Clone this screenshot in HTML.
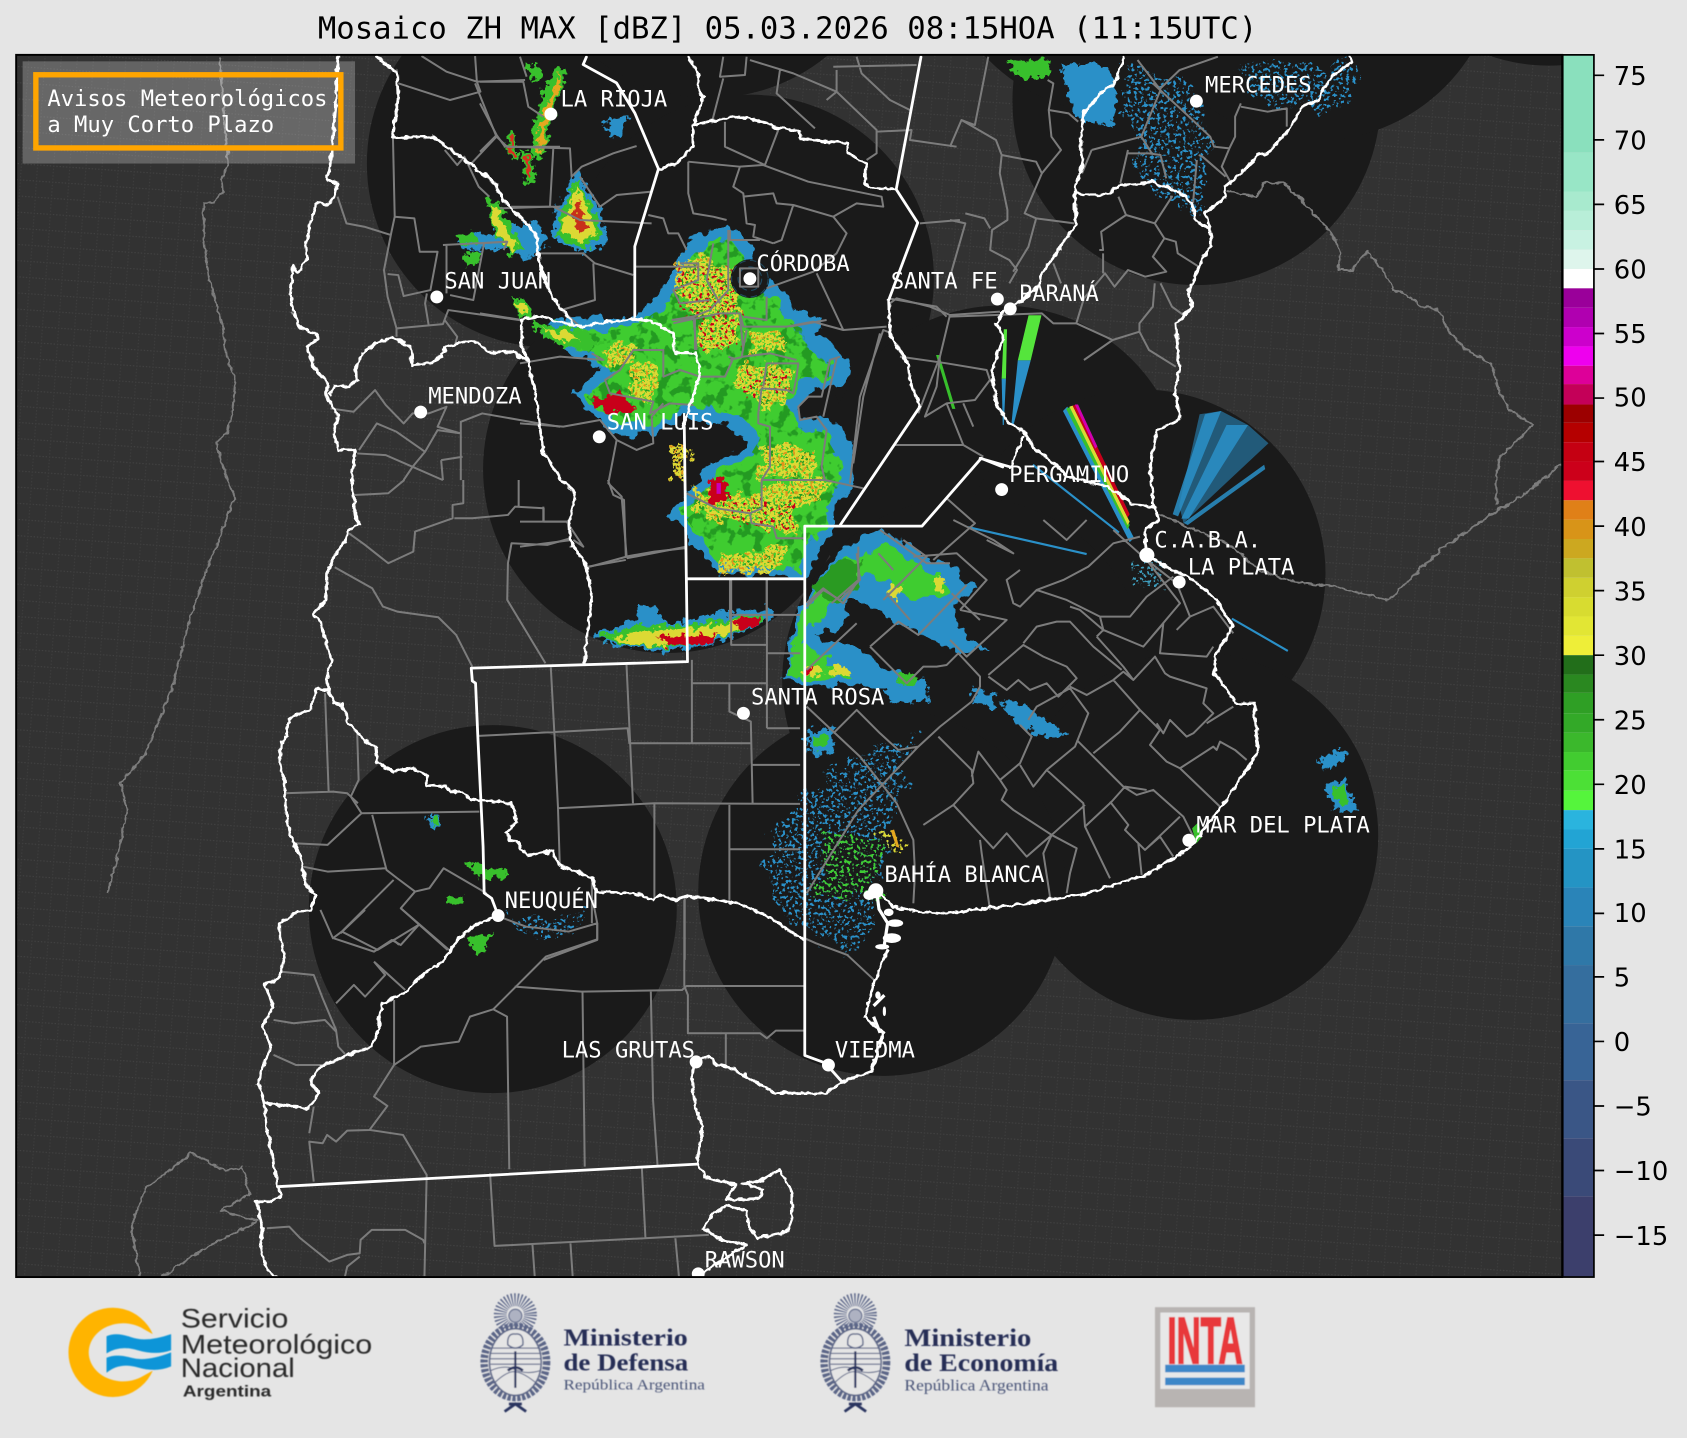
<!DOCTYPE html>
<html><head><meta charset="utf-8"><title>Mosaico ZH MAX</title>
<style>
html,body{margin:0;padding:0;background:#e5e5e5}
svg{display:block}
.w{fill:none;stroke:#fff;stroke-width:2.6;stroke-linejoin:round;stroke-linecap:round}
.g path{fill:none;stroke:#7c7c7c;vector-effect:non-scaling-stroke;stroke-width:2;stroke-linejoin:round}
.l{font-family:"DejaVu Sans Mono","Liberation Mono",monospace;font-size:20.6px;fill:#fff}
.t{font-family:"DejaVu Sans","Liberation Sans",sans-serif;font-size:24px;fill:#000}
.s{font-family:"Liberation Sans",sans-serif;fill:#2a2a2a}
.m{font-family:"Liberation Serif",serif;font-weight:bold;fill:#262e56}
.r{font-family:"Liberation Serif",serif;fill:#4a5478}
</style></head><body>
<svg xmlns="http://www.w3.org/2000/svg" width="1687" height="1438" viewBox="0 0 1568 1336.6">
<defs>
<clipPath id="ax"><rect x="15" y="51" width="1437" height="1136"/></clipPath>
<clipPath id="body"><path d="M678,222 692,240 692,262 722,280 730,298 745,305 752,325 772,338 770,352 745,350 733,372 737,396 765,402 783,432 782,452 768,470 768,492 750,505 742,530 675,526 655,505 632,475 655,455 668,437 695,427 708,405 690,388 640,376 610,392 572,392 545,369 570,348 540,322 525,312 590,304 620,282 635,250 648,232Z"/></clipPath>
<pattern id="gr" width="15" height="15" patternUnits="userSpaceOnUse" patternTransform="rotate(4)">
<path d="M0 .5H15" stroke="#434343" stroke-width="1" stroke-dasharray="1.2 1.8"/><path d="M.5 0V15" stroke="#3e3e3e" stroke-width="1" stroke-dasharray="1.2 1.8"/></pattern>
<filter id="rough" x="-15%" y="-15%" width="130%" height="130%" color-interpolation-filters="sRGB"><feTurbulence type="fractalNoise" baseFrequency=".07" numOctaves="3" seed="4" result="n"/><feDisplacementMap in="SourceGraphic" in2="n" scale="18" xChannelSelector="R" yChannelSelector="G"/></filter>
<filter id="rough2" x="-20%" y="-20%" width="140%" height="140%" color-interpolation-filters="sRGB"><feTurbulence type="fractalNoise" baseFrequency=".14" numOctaves="3" seed="9" result="n"/><feDisplacementMap in="SourceGraphic" in2="n" scale="14" xChannelSelector="R" yChannelSelector="G"/></filter>
<filter id="wig" filterUnits="userSpaceOnUse" x="0" y="40" width="1460" height="1160" color-interpolation-filters="sRGB"><feTurbulence type="fractalNoise" baseFrequency=".16" numOctaves="2" seed="21" result="n"/><feDisplacementMap in="SourceGraphic" in2="n" scale="5" xChannelSelector="R" yChannelSelector="G"/></filter>
<!-- sparse blue/other speckle with irregular outline -->
<filter id="speck" x="-15%" y="-15%" width="130%" height="130%" color-interpolation-filters="sRGB"><feTurbulence type="fractalNoise" baseFrequency=".05" numOctaves="3" seed="6" result="n0"/><feDisplacementMap in="SourceGraphic" in2="n0" scale="34" xChannelSelector="R" yChannelSelector="G" result="d"/><feTurbulence type="fractalNoise" baseFrequency=".33" numOctaves="2" seed="5" result="n"/><feColorMatrix in="n" type="matrix" values="0 0 0 0 0 0 0 0 0 0 0 0 0 0 0 12 0 0 0 -6.6" result="m"/><feComposite in="d" in2="m" operator="in"/></filter>
<!-- mottled patches -->
<filter id="mott" x="-5%" y="-5%" width="110%" height="110%" color-interpolation-filters="sRGB"><feTurbulence type="fractalNoise" baseFrequency=".09" numOctaves="3" seed="12" result="n"/><feColorMatrix in="n" type="matrix" values="0 0 0 0 0 0 0 0 0 0 0 0 0 0 0 12 0 0 0 -6.5" result="m"/><feComposite in="SourceGraphic" in2="m" operator="in"/></filter>
<!-- yellow: rough outline + fine grain holes -->
<filter id="yel" x="-25%" y="-25%" width="150%" height="150%" color-interpolation-filters="sRGB"><feTurbulence type="fractalNoise" baseFrequency=".08" numOctaves="3" seed="17" result="n0"/><feDisplacementMap in="SourceGraphic" in2="n0" scale="22" xChannelSelector="R" yChannelSelector="G" result="d"/><feTurbulence type="fractalNoise" baseFrequency=".42" numOctaves="2" seed="8" result="n"/><feColorMatrix in="n" type="matrix" values="0 0 0 0 0 0 0 0 0 0 0 0 0 0 0 14 0 0 0 -5.6" result="m"/><feComposite in="d" in2="m" operator="in"/></filter>
<!-- sparse hot pixels -->
<filter id="hot" x="-25%" y="-25%" width="150%" height="150%" color-interpolation-filters="sRGB"><feTurbulence type="fractalNoise" baseFrequency=".08" numOctaves="3" seed="17" result="n0"/><feDisplacementMap in="SourceGraphic" in2="n0" scale="22" xChannelSelector="R" yChannelSelector="G" result="d"/><feTurbulence type="fractalNoise" baseFrequency=".3" numOctaves="2" seed="31" result="n"/><feColorMatrix in="n" type="matrix" values="0 0 0 0 0 0 0 0 0 0 0 0 0 0 0 16 0 0 0 -9.6" result="m"/><feComposite in="d" in2="m" operator="in"/></filter>
<filter id="b1"><feGaussianBlur stdDeviation=".45"/></filter>
<path id="yp" d="M628,244 650,236 672,246 690,250 686,272 692,288 662,294 640,286 628,264ZM650,298 670,292 688,300 684,318 660,325 648,316ZM694,312 712,306 732,312 726,326 700,328ZM684,344 708,338 738,342 734,362 722,380 708,384 704,364 684,360ZM708,418 732,412 758,420 752,444 722,440 706,446ZM640,450 676,462 706,458 724,446 776,446 764,462 736,472 742,498 716,490 696,484 650,482ZM668,518 700,512 732,508 732,526 696,532 672,534ZM584,344 600,336 612,346 606,376 588,372ZM562,326 590,320 590,338 568,340ZM626,412 640,416 634,450 625,444Z"/>
<g id="emb" fill="none" stroke="#5c6688">
<circle cy="-44" r="14" stroke-width="12" stroke-dasharray="1.1 1.5"/>
<circle cy="-43" r="6" fill="#aeb2c2" stroke-width="1"/>
<ellipse rx="29" ry="33" fill="#e5e5e5" stroke-width="7" stroke-dasharray="3 1.4"/>
<ellipse rx="24" ry="31" fill="#e5e5e5" stroke-width="1.5"/>
<path d="M-23,-13H23M-24,-8H24M-24,-3H24M-23,2H23" stroke-width="1"/>
<path d="M-23,8Q-10,2 0,7T23,8M-20,20Q-8,8 0,9T20,20" stroke-width="1"/>
<path d="M0,-10V24" stroke="#2c3560" stroke-width="2"/>
<path d="M-7,-16Q-8,-27 0,-26Q8,-27 7,-16Q0,-10 -7,-16Z" fill="#e5e5e5" stroke-width="1.3"/>
<path d="M-7,8Q0,2 7,8" stroke-width="2.4" stroke="#2c3560"/>
<path d="M-10,46 L0,39 L10,46M-6,39H6" stroke="#2c3560" stroke-width="2.6"/>
</g>
</defs>
<rect width="1568" height="1337" fill="#e5e5e5"/>
<text x="732" y="36" text-anchor="middle" font-family="'DejaVu Sans Mono','Liberation Mono',monospace" font-size="28.45" fill="#000">Mosaico ZH MAX [dBZ] 05.03.2026 08:15HOA (11:15UTC)</text>

<g clip-path="url(#ax)">
<rect x="15" y="51" width="1437" height="1136" fill="#323232"/>
<rect x="15" y="51" width="1437" height="1136" fill="url(#gr)"/>
<g fill="#1a1a1a">
<circle cx="512" cy="152" r="171"/><circle cx="697" cy="259" r="171"/><circle cx="620" cy="436" r="171"/>
<circle cx="660" cy="-80" r="171"/><circle cx="1112" cy="94" r="171"/><circle cx="1222" cy="-40" r="171"/>
<circle cx="1040" cy="-65" r="171"/><circle cx="1440" cy="-110" r="171"/><circle cx="931" cy="455" r="171"/>
<circle cx="1061" cy="533" r="171"/><circle cx="898" cy="633" r="171"/><circle cx="1110" cy="777" r="171"/>
<circle cx="820" cy="829" r="171"/><circle cx="458" cy="845" r="171"/>
</g>

<!-- radar main body -->
<g filter="url(#rough)">
<path fill="#2a90c8" d="M678,208 700,226 700,250 731,273 740,291 762,297 759,313 775,319 790,344 784,359 756,359 743,375 743,390 762,387 781,393 793,428 790,452 778,471 778,490 762,511 750,536 669,533 647,511 623,474 647,449 657,431 685,421 694,406 675,397 635,387 607,403 567,403 533,369 558,341 523,325 499,307 514,297 589,294 610,276 626,248 638,226 657,217Z"/>
<path fill="#3fcc30" d="M678,222 692,240 692,262 722,280 730,298 745,305 752,325 772,338 770,352 745,350 733,372 737,396 765,402 783,432 782,452 768,470 768,492 750,505 742,530 675,526 655,505 632,475 655,455 668,437 695,427 708,405 690,388 640,376 610,392 572,392 545,369 570,348 540,322 525,312 590,304 620,282 635,250 648,232Z"/>
</g>
<g clip-path="url(#body)"><g filter="url(#mott)"><rect x="520" y="205" width="280" height="335" fill="#249a22"/></g></g>
<use href="#yp" fill="#dcd934" filter="url(#yel)"/>
<use href="#yp" fill="#e0941c" filter="url(#hot)"/>
<g filter="url(#rough2)" fill="#c8001a">
<path d="M551,371 575,366 590,380 565,386Z"/><path d="M660,446 674,443 678,466 662,470Z"/>
</g>
<path fill="#c8001a" filter="url(#hot)" d="M630,245H690V295H630ZM650,298H690V325H650ZM690,345H735V365H690ZM680,465H740V490H680Z"/>
<path fill="#c800b8" d="M666,449h4v10h-4z"/>

<!-- Cordoba rings -->
<circle cx="697" cy="259" r="18" fill="#1a1a1a"/>
<g fill="none" stroke="#2a90c8" stroke-opacity=".4" stroke-width="1" stroke-dasharray="6 4"><circle cx="697" cy="259" r="11"/><circle cx="697" cy="259" r="17"/></g>

<!-- NW storms -->
<g filter="url(#rough2)">
<path fill="#2a90c8" d="M425,222 470,212 500,205 510,225 490,242 470,232 430,232Z"/>
<path fill="#2a90c8" d="M535,160 556,190 566,222 542,236 512,220 518,192Z"/>
<path fill="#38c02c" d="M535,166 552,194 560,220 542,232 516,218 524,194Z"/>
<path fill="#dcd934" d="M536,172 548,198 553,218 540,226 522,214 529,194Z"/>
<path fill="#c8301a" d="M536,184 542,198 545,214 538,216 533,200Z"/>
<path fill="#38c02c" d="M452,185 462,187 485,230 474,238 458,212Z"/><path fill="#dcd934" d="M456,190 460,192 480,230 474,234 458,208Z"/>
<path fill="#38c02c" d="M505,85 520,62 526,70 512,110 505,145 495,150 495,122Z"/><path fill="#e5a820" d="M508,95 522,68 522,74 508,112 503,145 499,143 500,122Z"/>
<path fill="#38c02c" d="M470,125 478,124 482,146 474,148Z"/><path fill="#d83020" d="M472,127 476,126 479,144 475,145Z"/>
<path fill="#38c02c" d="M484,140 492,140 499,168 488,172Z"/><path fill="#d83020" d="M487,144 490,143 495,165 490,167Z"/>
<path fill="#38c02c" d="M425,218 442,216 445,228 428,228Z"/>
<path fill="#38c02c" d="M430,235 445,233 445,247 430,247Z"/>
<path fill="#38c02c" d="M475,276 490,278 496,296 483,296Z"/><path fill="#dcd934" d="M478,280 487,282 490,292 484,292Z"/>
<path fill="#38c02c" d="M495,300 540,305 560,320 540,325 510,318Z"/><path fill="#dcd934" d="M505,305 530,309 540,318 515,314Z"/>
<path fill="#38c02c" d="M490,62 500,58 503,72 493,75Z"/>
<path fill="#2a90c8" d="M565,112 585,108 575,130 560,120Z"/>
</g>
<!-- south band -->
<g filter="url(#rough2)">
<path fill="#2a90c8" d="M552,590 590,575 595,560 610,565 620,580 670,570 715,565 720,575 690,588 660,600 620,606 570,600Z"/>
<path fill="#38c02c" d="M556,592 595,580 625,582 670,576 710,570 712,578 685,588 655,598 620,602 572,598Z"/>
<path fill="#dcd934" d="M570,593 610,586 660,582 700,574 702,580 660,596 615,600 580,598Z"/>
<path fill="#c8001a" d="M610,592 668,590 660,598 622,600Z"/><path fill="#c8001a" d="M682,578 708,572 704,582 688,586Z"/>
</g>
<!-- Bolivar wedge -->
<g filter="url(#rough)">
<path fill="#2a90c8" d="M728,632 740,570 780,508 820,490 858,515 885,525 906,550 885,560 895,590 918,606 890,606 860,590 830,575 805,560 785,560 790,575 760,590 790,600 830,625 860,640 840,645 800,635 770,640Z"/>
<path fill="#3fcc30" d="M730,628 744,572 782,518 800,516 825,505 850,525 875,535 878,555 850,555 825,540 805,535 775,545 762,575 750,585 745,600 770,615 790,630 760,632Z"/>
<path fill="#2a9a22" d="M755,545 782,518 800,520 798,545 770,560Z"/>
</g>
<g filter="url(#rough2)"><path fill="#dcd934" d="M828,540 838,545 834,558 825,552ZM868,535 878,540 876,552 868,548ZM745,622 760,618 766,626 748,630ZM770,622 785,618 790,628 772,628Z"/><path fill="#c8001a" d="M748,622 754,620 754,628 748,628Z"/></g>
<!-- BA patches -->
<g filter="url(#rough2)" fill="#2a90c8">
<path d="M930,650 950,655 993,684 972,686 945,672Z"/><path d="M905,640 925,645 925,660 905,650Z"/><path d="M750,680 775,676 776,700 750,700Z"/>
<path d="M820,640 860,630 865,650 830,655Z"/>
</g>
<g filter="url(#rough2)"><path fill="#38c02c" d="M755,684 770,684 768,696 755,696Z"/><path fill="#38c02c" d="M833,625 855,628 850,640 835,636Z"/></g>
<g filter="url(#speck)"><path fill="#2a90c8" d="M750,735 800,700 855,680 835,740 830,790 815,830 800,880 760,880 725,850 710,790Z"/><path fill="#2a90c8" d="M1040,60 1110,70 1125,130 1115,200 1060,170Z"/><path fill="#2a90c8" d="M1140,58 1260,58 1250,100 1180,100Z"/><path fill="#2a90c8" d="M470,852 540,848 540,866 480,866Z"/></g>
<g filter="url(#speck)"><path fill="#3fcc30" d="M770,770 820,780 815,840 760,830Z"/><path fill="#dcd934" d="M815,765 838,770 838,795 822,795Z"/></g>
<path fill="#2a90c8" filter="url(#rough2)" d="M985,60 1030,60 1038,90 1035,118 1000,110Z"/>
<path fill="#38c02c" filter="url(#rough2)" d="M935,56 975,56 975,72 945,72Z"/>
<path fill="#e5a820" d="M828,772l5,15 3,1-5-17z"/>
<!-- Neuquen & MdP -->
<g filter="url(#rough2)">
<path fill="#2a90c8" d="M1225,705 1250,696 1252,706 1230,716ZM1232,730 1250,722 1260,752 1240,754Z"/>
<path fill="#38c02c" d="M1238,732 1250,728 1253,748 1243,748Z"/>
<path fill="#2a90c8" d="M398,758h12v10h-12z"/><path fill="#38c02c" d="M402,760h6v6h-6z"/>
<path fill="#38c02c" d="M434,802 474,810 470,818 440,812Z"/><path fill="#38c02c" d="M416,832h14v8h-14z"/>
<path fill="#38c02c" d="M434,872 458,866 450,885 438,885Z"/>
</g>
<!-- streak wedges -->
<path fill="#55e53c" d="M956,293 968,293 958,335 946,335Z"/><path fill="#2a90c8" d="M946,335 958,335 942,395 940,395Z"/>
<path fill="#55e53c" d="M933,306 936,306 935,352 931,352Z"/><path fill="#2a90c8" d="M931,352 935,352 933,395 932,395Z"/>
<path fill="#2a90c8" d="M988,382 992,378 1054,500 1050,504Z"/><path fill="#38c02c" d="M991,380 995,378 1050,488 1048,492Z"/><path fill="#dcd934" d="M994,378 997,377 1050,485 1048,488Z"/><path fill="#c8001a" d="M997,377 1001,376 1050,478 1048,481Z"/><path fill="#d000b0" d="M999,376 1002,376 1020,415 1018,417Z"/>
<path fill="#2a90c8" d="M1096,470 1115,385 1135,382 1160,395 1179,412 1100,486Z" opacity=".55"/>
<path fill="#2a90c8" opacity=".85" d="M1090,478 1120,385 1135,382 1095,480ZM1098,482 1140,395 1160,395 1105,482ZM1100,486 1175,432 1176,436 1104,488Z"/>
<path stroke="#2a90c8" stroke-width="2" fill="none" d="M1145,575 1197,605M900,490 1010,515M960,432 1040,495"/>
<path fill="#3fa0c0" filter="url(#speck)" d="M1055,520h25v25h-25z"/>
<path fill="#38c02c" d="M1108,770l6-6 3,14-5,6zM870,330l3 0 15,50-3,0z"/>

<!-- grey lines -->
<g class="g">
<g filter="url(#wig)">
<path d="M204,52 212,152 206,167 207,178 198,189 189,189 189,217 194,257 207,304 211,332 219,352 216,381 211,403 201,411 206,431 212,446 218,462 192,530 175,580 160,640 135,700 112,728 118,755 108,800 100,830"/>
<path d="M130,1187 122,1140 135,1105 178,1072 210,1088 225,1085 232,1110 205,1125 240,1135 190,1160 150,1187"/>
<path d="M1394,365 1403,381 1425,395 1410,410 1394,425 1390,450 1392,470M1452,431 1419,458 1394,473 1340,510 1290,558 1240,545 1202,541 1171,530 1140,505 1075,477"/>
<path d="M1141,177 1168,183 1175,170 1193,170 1210,186 1237,217 1246,232 1244,251 1256,251 1271,234 1285,251 1296,270 1306,273 1321,285 1337,288 1344,304 1361,324 1386,338 1394,365"/>
</g>
<g transform="scale(.332,.3099)"><path d="M1180,168 1250,215 1335,245 1345,275 1260,300 1115,250M1330,168 1335,245 1470,240M1100,410 1105,650 1095,700 1075,810 1085,890 1110,985 1110,1010M1105,650 1160,655 1175,755 1225,755 1205,870 1130,888 1115,825 1085,822M1240,735 1420,725 1410,750M1250,735 1250,880M1355,730 1325,900 1260,885M1195,880 1190,910 1200,975M1110,985 1240,972 1255,930 1455,960M1245,960 1280,1010 1275,1030M1320,490 1390,410 1420,440 1568,440M1430,620 1568,620M1245,450 1280,495 1300,470 1340,560 1370,590M1330,250 1390,410M925,1225 990,1235 1050,1170 1080,1215 1130,1270 1155,1240 1200,1240 1250,1220 1225,1280 1290,1300M1005,1350 1055,1270 1110,1295 1190,1355 1155,1400 1130,1440M1000,1360 1080,1365 1155,1400 1240,1440M1290,1440 1290,1265 1350,1240 1510,1270 1568,1280M1235,1380 1240,1440M1235,1380 1295,1370M1190,1355 1225,1290 1290,1300M945,590 970,670 1020,680 1095,705"/></g>
<g transform="translate(223.1,446.1) scale(.332,.3098)"><path d="M320,45 415,40 460,0M625,0 625,70 595,75 595,115 490,155 485,215 415,250 350,195 305,160M600,115 650,115 750,105 770,80 850,85 850,125 920,125M780,0 780,80M1030,0 1045,45 1075,60 1080,230 1160,215 1245,205M1080,240 975,260M925,175 860,195 760,190 750,250 748,360 810,470 855,550M265,262 370,325 400,380 440,395 555,412 605,465 650,560M870,562 880,760 890,980 895,1150M668,768 1085,745 1090,790 1430,790M1082,555 1100,970M1265,540 1265,790M1265,610 1475,610 1475,745M1370,610 1370,695 1430,725 1435,970M1375,300 1375,495 1475,495M1475,300 1475,610M1375,405 1568,405M1475,520 1568,520M1435,855 1568,855M1475,745 1568,745M888,985 1160,970 1568,972M1160,970 1160,1255M1370,975 1370,1260M1370,1108 1568,1108M1245,1255 1245,1440M238,640 248,935M328,760 332,900 310,950 340,1000M125,940 260,935 300,940 330,970M340,1000 670,995M340,1000 245,1095 150,1090M370,1005 410,1170 440,1195M175,1160 245,1175 410,1165M440,1195 490,1235 530,1225 570,1165 690,1240M490,1235 450,1285 585,1410M430,1200 285,1355 385,1410 500,1335M285,1355 260,1375 225,1290M725,1310 800,1340 920,1355 1000,1330 1000,1380 850,1440M985,1190 985,1330M385,1410 430,1380 445,1395"/></g>
<g transform="translate(223.1,836.5) scale(.415,.3098)"><path d="M790,0 800,70 800,118 685,170 567,328 515,350 490,425 405,440 345,495 300,590 330,618 290,690 240,692 215,725 195,705 185,730 155,725 165,845M615,260 765,275 990,270 1000,258 1265,258M767,275 772,800M920,275 925,600 935,795M567,328 598,350 603,808M345,300 345,495M995,0 995,258 1003,285 1003,400 1165,400 1180,415 1200,392 1265,392M1088,400 1088,500M290,690 365,705 418,825 413,1130M560,820 570,1038 1050,1005M900,805 908,1015M655,1035 660,1130M740,1030 745,1130M975,1015 983,1130M90,215 165,225 185,295 215,390 220,440 235,462M75,360 120,370 190,360 215,395M75,465 125,495 195,495M165,620 155,700M60,985 110,980 135,1015 200,1085 240,1065 268,1060 270,1020 295,990 370,990 410,1020 413,1030M268,1070 240,1100 235,1130M360,25 465,150M225,100 280,30M210,115 300,155 340,120 360,135 400,75M300,185 370,270M215,310 255,255 280,290 325,225 300,185M1265,115 1290,130 1360,165 1420,240"/></g>
<g transform="translate(883,46.5) scale(.3557,.3098)"><path d="M100,20 65,225 30,210 0,290M30,210 120,270 135,315 130,370 150,480 150,510 110,540 105,600 155,630 175,660 155,700M135,315 225,335 240,370 195,490 225,505 325,520M225,505 205,590 165,665M0,510 40,520 0,680M40,490 90,505 105,535M240,370 290,300 265,260 258,180 270,100 255,90M258,180 310,190 335,215M370,300 500,260 550,120 490,30M370,300 345,370M465,300 445,400M465,310 520,310 550,315 565,385M500,260 530,315M550,115 600,60 700,20M530,100 620,195 680,260 690,290 730,295 710,350 735,400M650,315 660,320 720,380M645,330 635,460M760,170 830,185 880,175 880,230M760,160 745,200 745,260 730,295M575,440 580,440 535,520 460,495 440,440M460,495 395,545 400,600 390,600M535,520 560,565 590,575 595,610 650,650M560,565 530,620 565,665 510,680 465,660 430,710 405,670 350,745 330,820M400,610 400,670M550,700 580,770 610,795M535,700 530,770 495,820 495,845 425,870 330,820 270,820 240,790 0,800M495,845 520,900 590,950M425,870 350,930M270,640 290,700"/></g>
<g transform="translate(446.1,46.5) scale(.3098)"><path d="M0,95 130,95 145,170 190,200M120,20 140,80M50,255 0,305M0,160 50,255 75,290 270,295 275,380 305,350 400,310 470,288M220,295 210,470 60,475M300,380 360,470 410,435 515,425M220,470 300,510 515,520M0,580 80,575M175,610 310,610 345,640 460,675M340,640 345,750 245,780 300,830M0,790 125,810M505,495 550,505 565,550 595,550 620,600M465,650 650,650M625,335 780,350 850,345 985,395 1205,440 1210,470 1130,460 1060,500 1100,550 1070,610 1000,665 860,715M625,335 625,430 640,490 700,500 740,510M780,350 760,410 790,430 800,520 825,525 820,560 880,580M790,440 880,430 890,460 940,465 905,570 880,580M940,465 1060,500M735,215 735,290 855,345 895,240M730,20 720,80 795,75 800,20M730,85 695,220M900,60 890,130 1005,235M810,30 940,70 1070,125 1190,240 1190,310 1160,330M1060,50 1310,45M1130,20 1145,70 1230,150 1290,180M1070,60 1070,125 1040,150M1190,245 1295,240 1290,270 1430,290M1320,520 1440,510M1225,745 1370,770 1400,800M750,540 750,570 840,570M780,655 835,655 835,710 780,710ZM700,580 680,690 720,760M745,540 745,720 690,780 640,800 575,810M600,640 655,640 655,690 580,720 600,760 690,750M640,800 650,900M780,800 790,900M860,740 860,810 790,800M930,830 1040,810"/></g>
<g transform="translate(483.3,185.9) scale(.3098)"><path d="M500,880 590,925 690,940 725,925 725,840 915,840 1030,865M690,940 695,970 760,980 770,1015 855,1015M725,840 750,800 750,680 715,670 715,640 725,565 800,570 820,580 830,530 835,490 790,490 740,490 730,560M915,840 905,800 920,690 890,650 840,660 835,620 865,590 905,590 930,480 960,470M910,650 950,475M625,470 640,475 615,530 540,530 480,510 430,530 430,450 340,450 300,510 255,540 270,580 400,605 390,640 450,610 520,615M460,360 525,355 525,450M460,370 600,340 660,340 670,380 800,380 880,365 915,375 970,390M665,470 680,390M630,480 670,470 750,460 830,480M0,670 130,680 240,660 290,720 350,750 400,730 395,650 430,610M290,720 265,850 305,890 320,1070 210,1100M320,1075 500,1040M0,965 70,965 140,965 190,1040 160,1020M70,920 70,965M155,1020 0,1040M630,1135 630,1260M740,1135 740,1260M215,460 250,480 120,470 0,490M1110,310 1130,295 1230,320 1290,345 1440,335M1115,400 1090,390 1020,590 990,850M1080,400 1030,590 1000,790M1290,345 1260,470 1195,640M1140,470 1280,490 1400,510 1410,540 1365,600 1280,610 1215,650 1250,560 1260,470M1280,610 1330,735 1120,735M1330,735 1390,770M1330,610 1360,680M890,220 970,390 1100,380M1280,895 1365,970 1240,1080M1150,1020 1220,1070 1090,1200M1015,1040 1015,1140 935,1210M1075,1060 1120,1110M1295,1180 1380,1260M1100,1180 1170,1260M860,1210 910,1165 970,1210 1015,1140"/></g>
<g transform="translate(725,483.3) scale(.3098)"><path d="M80,560 240,710 350,850 400,960 405,1060 400,1150M80,450 230,310M270,380 355,305 415,345 560,195M270,380 380,490 430,440 470,440 500,435 535,400 600,470 600,500 575,545 480,620 415,680 235,870 80,1120M160,640 230,570 300,640 355,690 415,680M475,650 575,750 580,790 520,855 430,915M520,855 640,985 680,940 740,1010 780,975 815,945 915,855M575,770 595,695 660,780 680,810 665,840 700,870 815,945M660,780 720,730 755,650 720,615M720,735 760,800 800,750 885,680 925,580 870,505 770,560 745,600M625,465 730,375 790,410 860,440 890,475 835,530 800,490 750,510 715,480 680,510 625,470M730,370 770,320 830,305 870,305 940,380 1025,450M800,750 910,850 915,920 990,1075M915,920 995,845 1035,800 1100,810M890,660 1030,800 1070,825 1120,810 1210,890 1240,950M990,845 1045,915 1035,930 1095,990 1200,890M1095,990 1140,950 1180,1010M1075,970 1085,1065M815,945 890,985 870,1060 860,1120M815,945 790,1000 810,1130M600,960 605,1000 630,1170M940,700 1020,635 1080,570 1140,630 1110,675 1160,725 1200,745 1320,860M1080,570 1000,480 920,525 870,500M1000,480 1030,455 1060,480 1125,410 1155,460 1170,470 1280,505 1270,550 1300,580 1240,640 1220,650 1170,600 1150,640 1130,610M1200,745 1300,680 1310,690 1320,665 1365,690 1400,720M1280,610 1360,560M950,350 1030,440 1060,480M950,350 970,330 900,270 870,260M720,150 680,180 700,250 720,260 770,210 850,180 925,140 1000,70 1080,50M770,210 860,240 960,290 1050,290 1100,230 1180,170M960,290 970,330 1090,380 1150,310M1090,380 1200,250 1100,120M400,110 530,100 620,180 540,270M540,270 680,300 560,410 510,360M230,100 240,180 180,240 130,210 80,260M300,30 440,130 510,130M620,60 700,100 640,60 520,0M790,0 860,60 920,0M1000,30 1100,120 1190,190 1230,290 1300,260 1360,340M1150,310 1140,400 1280,410 1300,380M1230,290 1190,330"/></g>
</g>

<!-- white lines: wiggly rivers/borders -->
<g filter="url(#wig)">
<path class="w" d="M314,52 312,100 307,152 304,167 314,170 310,184 305,190 294,189 289,205 284,229 285,242 277,253 272,248 270,273 272,288 279,304 294,310 295,316 285,322 292,341 304,356 304,369 314,386 310,403 315,418 330,418 327,446 329,465 331,483 334,488 323,493 321,502 311,516 304,533 303,558 291,570 298,578 303,598 309,615 304,624 305,641 294,641 288,660 276,664 268,669 266,685 261,694 260,709 265,731 266,756 270,778 279,796 284,821 293,832 289,846 277,847 260,858 260,871 265,889 258,911 246,914 254,936 244,954 252,973 244,991 240,1007 246,1025 248,1050 252,1069 258,1103 262,1111 250,1117 238,1117 244,1142 242,1159 248,1180 258,1188"/>
<path class="w" d="M305,641 311,654 318,655 324,672 339,688 349,694 351,709 366,717 382,714 396,720 397,730 414,731 419,736 429,736 437,743 474,746 479,756 480,765 470,774 474,781 480,782 490,795 514,791 519,804 550,816 555,829 588,830 608,836 613,832 628,837 641,833 688,840 714,852 748,874"/>
<path class="w" d="M463,851 439,861 422,877 412,894 389,909 377,922 356,933 352,945 352,956 345,973 323,981 298,991 289,1004 296,1016 287,1030 273,1029 246,1025"/>
<path class="w" d="M349,52 369,67 370,92 365,128 402,127 415,136 428,146 460,170 468,186 498,217 501,242 508,266 520,285 533,301"/>
<path class="w" d="M307,366 310,359 324,359 332,353 330,344 337,328 349,319 365,314 382,322 383,339 400,338 413,328 413,322 440,316 455,327 476,327 491,336 499,375 505,421 522,446 535,458 529,486 530,502 545,527 550,554 543,616"/>
<path class="w" d="M485,297 485,322 491,336M485,297 502,294 539,304 554,301 590,296 609,300 626,310 627,328 646,328 651,347 635,397"/>
<path class="w" d="M612,157 629,152 644,136 644,116 685,108 716,115 720,119 743,121 743,129 788,133 788,142 805,153 804,170 809,175 833,176M644,116 650,102 654,91 649,84 649,68 640,53M826,279 827,310 844,338 846,356 855,378"/>
<path class="w" d="M1045,53 1036,77 1025,85 1007,105 1004,139 1007,152 999,174 1000,208 979,240 968,254 965,266 947,282 933,288 926,301 933,313 922,344 926,375 937,393 951,400 962,418 982,432 991,443 1029,452 1053,469 1072,471 1078,483 1066,490 1064,499 1066,516 1084,527 1097,533 1109,539 1128,555 1146,582 1129,610 1129,626 1149,654 1166,654 1169,700 1140,743 1106,788 1066,813 1004,832 942,841 880,849 849,847 830,843 821,833 815,827"/>
<path class="w" d="M1255,53 1257,57 1239,70 1230,82 1226,93 1210,99 1200,118 1178,143 1168,144 1160,155 1139,173 1139,183 1120,198 1125,214 1125,229 1118,239 1104,273 1109,285 1093,301 1096,344 1092,363 1097,390 1075,400 1069,434 1072,468 1078,483"/>
<path class="w" d="M999,177 1006,181 1029,181 1041,172 1071,169 1096,178 1109,192 1111,204 1125,214M939,434 951,406"/>
<path class="w" d="M646,987 659,982 667,990 680,993 700,1004 721,1016 767,1016 783,1006 810,996 821,960 804,945 812,914 825,883M646,987 643,1001 646,1028 653,1047 648,1081 655,1094 684,1101 675,1115 706,1114 709,1106 690,1100 706,1098 725,1087 736,1109 736,1131 731,1145 704,1151 696,1140 694,1125 675,1121 663,1128 653,1142 671,1152 694,1157 655,1182"/>
</g>
<!-- white lines: straight boundaries -->
<path class="w" d="M258,1103 648,1082M438,621 639,615M438,621 439,633 442,635 444,682 449,787 450,830 457,835 463,851M636,397 639,615M638,538H748M748,489V981L767,988 783,1006M748,489H857L912,426 932,434M911,426 939,434"/>
<path class="w" d="M545,53 542,60 573,77 590,105 612,157 590,229 590,294M833,176 856,53M833,176 853,207 826,279M855,378 781,488"/>
<g fill="#fff" stroke="#fff"><path stroke-width="3" fill="none" d="M815,830 817,845 825,858 822,878M812,935 822,925M818,960 812,945"/><ellipse cx="832" cy="858" rx="7" ry="3"/><ellipse cx="829" cy="872" rx="8" ry="4"/><ellipse cx="820" cy="880" rx="6" ry="2"/><ellipse cx="826" cy="848" rx="4" ry="3"/><ellipse cx="808" cy="832" rx="5" ry="4"/><ellipse cx="816" cy="925" rx="2" ry="3"/><ellipse cx="822" cy="940" rx="1" ry="4"/></g>

<!-- cities -->
<g fill="#fff"><circle cx="512" cy="106" r="6"/><circle cx="406" cy="276" r="6"/><circle cx="697" cy="259" r="6"/><circle cx="927" cy="278" r="6"/><circle cx="939" cy="287" r="6"/><circle cx="391" cy="383" r="6"/><circle cx="557" cy="406" r="6"/><circle cx="1112" cy="94" r="6"/><circle cx="931" cy="455" r="6"/><circle cx="1066" cy="516" r="7"/><circle cx="1096" cy="541" r="6"/><circle cx="691" cy="663" r="6"/><circle cx="1105" cy="781" r="6"/><circle cx="814" cy="828" r="7"/><circle cx="463" cy="851" r="6"/><circle cx="647" cy="987" r="6"/><circle cx="770" cy="990" r="6"/><circle cx="649" cy="1184" r="6"/></g>
<text class="l" x="521" y="99">LA RIOJA</text><text class="l" x="413" y="268">SAN JUAN</text><text class="l" x="703" y="252">CÓRDOBA</text><text class="l" x="828" y="268">SANTA FE</text><text class="l" x="947" y="280">PARANÁ</text><text class="l" x="398" y="375">MENDOZA</text><text class="l" x="564" y="399">SAN LUIS</text><text class="l" x="1120" y="86">MERCEDES</text><text class="l" x="938" y="448">PERGAMINO</text><text class="l" x="1073" y="509">C.A.B.A.</text><text class="l" x="1104" y="534">LA PLATA</text><text class="l" x="698" y="655">SANTA ROSA</text><text class="l" x="1112" y="774">MAR DEL PLATA</text><text class="l" x="822" y="820">BAHÍA BLANCA</text><text class="l" x="469" y="844">NEUQUÉN</text><text class="l" x="522" y="983">LAS GRUTAS</text><text class="l" x="776" y="983">VIEDMA</text><text class="l" x="655" y="1178">RAWSON</text>

<!-- notice box -->
<rect x="21" y="57" width="309" height="95" fill="#fff" fill-opacity=".24"/>
<rect x="33.3" y="69.5" width="283.5" height="68" fill="#fff" fill-opacity=".03" stroke="#ffa500" stroke-width="5"/>
<text class="l" x="44" y="98.5">Avisos Meteorológicos</text>
<text class="l" x="44" y="122.8">a Muy Corto Plazo</text>
</g>
<rect x="15" y="51" width="1437" height="1136" fill="none" stroke="#000" stroke-width="1.8"/>

<!-- colorbar -->
<g>
<rect x="1453" y="51" width="28" height="91" fill="#8ae0bd"/><rect x="1453" y="142" width="28" height="36" fill="#98e6c6"/><rect x="1453" y="178" width="28" height="18" fill="#a8eace"/><rect x="1453" y="196" width="28" height="18" fill="#b8eed8"/><rect x="1453" y="214" width="28" height="18" fill="#c8f2e2"/><rect x="1453" y="232" width="28" height="18" fill="#def5ec"/><rect x="1453" y="250" width="28" height="18" fill="#fff"/>
<rect x="1453" y="268" width="28" height="18" fill="#9a009a"/><rect x="1453" y="286" width="28" height="18" fill="#b000b0"/><rect x="1453" y="304" width="28" height="18" fill="#cc00cc"/><rect x="1453" y="322" width="28" height="18" fill="#ee00ee"/><rect x="1453" y="340" width="28" height="17" fill="#dd0099"/><rect x="1453" y="357" width="28" height="19" fill="#c40058"/>
<rect x="1453" y="376" width="28" height="17" fill="#9c0000"/><rect x="1453" y="393" width="28" height="18" fill="#b50000"/><rect x="1453" y="411" width="28" height="18" fill="#c50012"/><rect x="1453" y="429" width="28" height="18" fill="#cc001a"/><rect x="1453" y="447" width="28" height="18" fill="#ee1030"/>
<rect x="1453" y="465" width="28" height="18" fill="#e08018"/><rect x="1453" y="483" width="28" height="18" fill="#d89418"/><rect x="1453" y="501" width="28" height="18" fill="#cca820"/><rect x="1453" y="519" width="28" height="18" fill="#c0c030"/><rect x="1453" y="537" width="28" height="18" fill="#cfd030"/><rect x="1453" y="555" width="28" height="18" fill="#d8dc30"/><rect x="1453" y="573" width="28" height="18" fill="#e2e634"/><rect x="1453" y="591" width="28" height="18" fill="#eeee38"/>
<rect x="1453" y="609" width="28" height="18" fill="#226e1a"/><rect x="1453" y="627" width="28" height="17" fill="#2a8820"/><rect x="1453" y="644" width="28" height="19" fill="#2f9f25"/><rect x="1453" y="663" width="28" height="18" fill="#33a928"/><rect x="1453" y="681" width="28" height="18" fill="#3bb82c"/><rect x="1453" y="699" width="28" height="17" fill="#42cc30"/><rect x="1453" y="716" width="28" height="19" fill="#4ce036"/><rect x="1453" y="735" width="28" height="18" fill="#55f53c"/>
<rect x="1453" y="753" width="28" height="18" fill="#2ab4de"/><rect x="1453" y="771" width="28" height="18" fill="#22a4d4"/><rect x="1453" y="789" width="28" height="36" fill="#2494c4"/><rect x="1453" y="825" width="28" height="36" fill="#2a84b8"/><rect x="1453" y="861" width="28" height="36" fill="#2f78a8"/><rect x="1453" y="897" width="28" height="54" fill="#356e9e"/><rect x="1453" y="951" width="28" height="53" fill="#386496"/><rect x="1453" y="1004" width="28" height="54" fill="#3a5686"/><rect x="1453" y="1058" width="28" height="54" fill="#3a4a78"/><rect x="1453" y="1112" width="28" height="75" fill="#3c3f6c"/>
</g>
<rect x="1452.5" y="51" width="29" height="1136" fill="none" stroke="#000" stroke-width="1.6"/>
<path stroke="#000" stroke-width="1.6" fill="none" d="M1481,70h10M1481,130h10M1481,190h10M1481,250h10M1481,310h10M1481,370h10M1481,429h10M1481,489h10M1481,549h10M1481,609h10M1481,669h10M1481,729h10M1481,789h10M1481,849h10M1481,908h10M1481,968h10M1481,1028h10M1481,1088h10M1481,1148h10"/>
<g class="t"><text x="1500" y="79">75</text><text x="1500" y="139">70</text><text x="1500" y="199">65</text><text x="1500" y="259">60</text><text x="1500" y="319">55</text><text x="1500" y="378">50</text><text x="1500" y="438">45</text><text x="1500" y="498">40</text><text x="1500" y="558">35</text><text x="1500" y="618">30</text><text x="1500" y="678">25</text><text x="1500" y="738">20</text><text x="1500" y="798">15</text><text x="1500" y="857">10</text><text x="1500" y="917">5</text><text x="1500" y="977">0</text><text x="1500" y="1037">−5</text><text x="1500" y="1097">−10</text><text x="1500" y="1157">−15</text></g>

<!-- logos -->
<g filter="url(#b1)">
<path fill="#ffb400" d="M142,1240A41,41.5 0 1 0 142,1274L133,1279A32,27 0 1 1 133,1235Z"/>
<path fill="#0a95d8" d="M99,1242Q108,1238 122,1243T159,1240V1255Q145,1260 128,1255T99,1258Z"/>
<path fill="#0a95d8" d="M99,1262Q108,1258 122,1262T159,1257V1270Q145,1276 128,1271T99,1276Z"/>
<text class="s" x="168" y="1234" font-size="25" textLength="100" lengthAdjust="spacingAndGlyphs">Servicio</text>
<text class="s" x="168" y="1258" font-size="25" textLength="178" lengthAdjust="spacingAndGlyphs">Meteorológico</text>
<text class="s" x="168" y="1280" font-size="25" textLength="106" lengthAdjust="spacingAndGlyphs">Nacional</text>
<text class="s" x="170" y="1298" font-size="15" font-weight="bold" textLength="82" lengthAdjust="spacingAndGlyphs">Argentina</text>
<use href="#emb" x="479" y="1266"/>
<text class="m" x="523.7" y="1250.5" font-size="23" textLength="115.5" lengthAdjust="spacingAndGlyphs">Ministerio</text>
<text class="m" x="523.7" y="1274" font-size="23" textLength="116" lengthAdjust="spacingAndGlyphs">de Defensa</text>
<text class="r" x="523.7" y="1291.5" font-size="14" textLength="131.5" lengthAdjust="spacingAndGlyphs">República Argentina</text>
<use href="#emb" x="795" y="1266"/>
<text class="m" x="840.6" y="1251" font-size="23.5" textLength="118" lengthAdjust="spacingAndGlyphs">Ministerio</text>
<text class="m" x="840.6" y="1274.5" font-size="23.5" textLength="143" lengthAdjust="spacingAndGlyphs">de Economía</text>
<text class="r" x="840.6" y="1292.5" font-size="14.5" textLength="134" lengthAdjust="spacingAndGlyphs">República Argentina</text>
<rect x="1073.5" y="1215" width="93" height="93" fill="#b8b4b2"/>
<rect x="1078.5" y="1220" width="83" height="71" fill="#e8e8e8"/>
<text x="1120" y="1267" text-anchor="middle" font-family="'Liberation Sans',sans-serif" font-weight="bold" font-size="60" fill="#e8373a" stroke="#e8373a" stroke-width="2" textLength="70" lengthAdjust="spacingAndGlyphs">INTA</text>
<rect x="1083" y="1268.5" width="74" height="7" fill="#3d87c8"/><rect x="1083" y="1280.5" width="74" height="7" fill="#3d87c8"/>
</g>
</svg>
</body></html>
